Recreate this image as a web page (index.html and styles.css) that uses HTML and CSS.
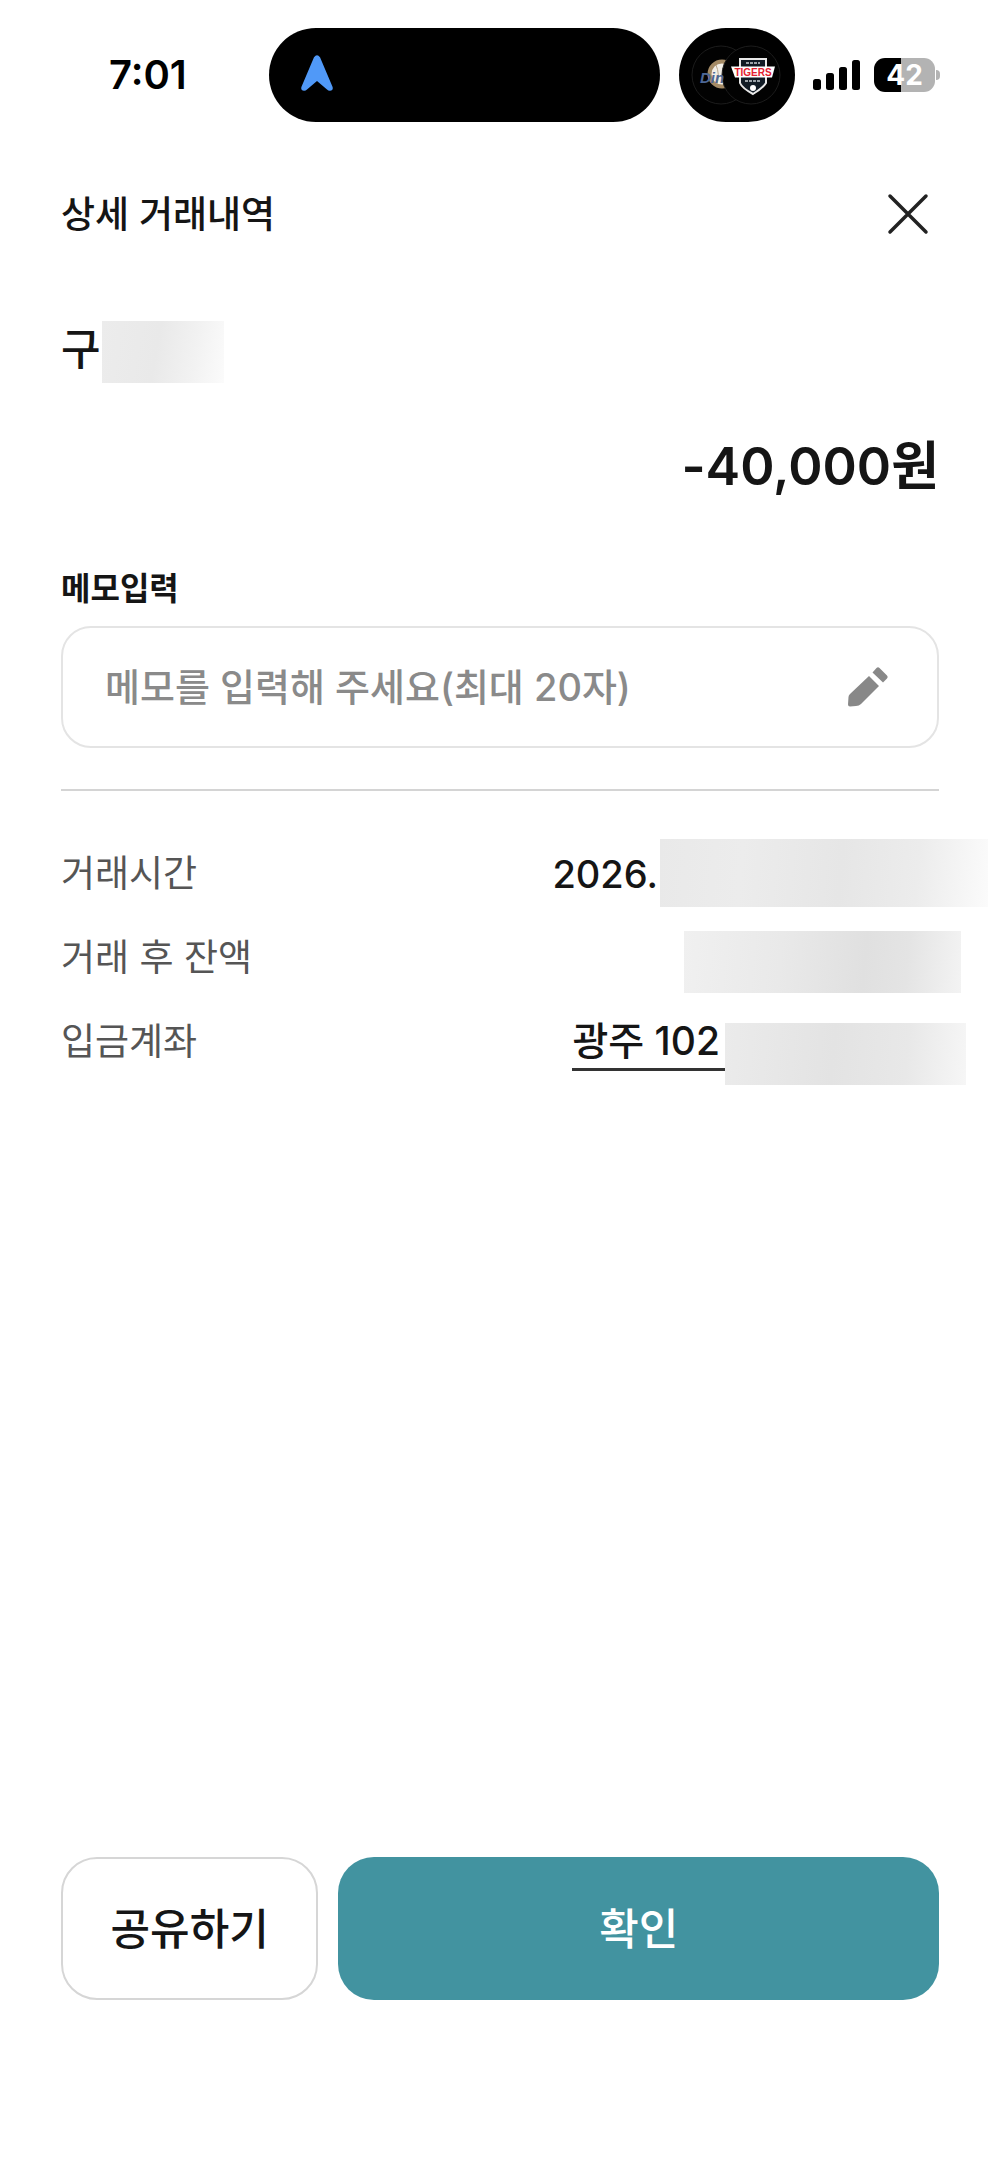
FILE: index.html
```html
<!DOCTYPE html>
<html lang="ko">
<head>
<meta charset="utf-8">
<meta name="viewport" content="width=device-width, initial-scale=1">
<title>상세 거래내역</title>
<link rel="stylesheet" href="styles.css">
</head>
<body>
<div class="screen">
  <div class="status-bar">
    <span class="clock">7:01</span>
    <div class="island">
      <svg width="34" height="37" viewBox="0 0 34 37" aria-hidden="true"><path d="M14 2.200Q17-1.500 20 2.200L32.600 32Q33.500 35.500 30 35.800Q28.500 36 27 34.500L17 26L7 34.500Q5.500 36 4 35.800Q.5 35.500 1.400 32Z" fill="#5099f8"/></svg>
    </div>
    <div class="activity">
      <svg width="116" height="94" viewBox="0 0 116 94" role="img" aria-label="Dinos, Tigers">
        <circle cx="42" cy="47" r="29" fill="#020202" stroke="#1c1c1c"/>
        <circle cx="43" cy="46" r="12.500" fill="#f2eee7" stroke="#a58b66" stroke-width="4"/>
        <path d="M37 37Q41 46 38 56" fill="none" stroke="#b9a58a"/>
        <circle cx="72" cy="47" r="29" fill="#020202" stroke="#1c1c1c"/>
        <text x="21" y="55" class="dinos">Din</text>
        <path d="M61 31H87V55Q84 60 74 66Q63 60 61 55Z" fill="#111b25" stroke="#e8e8e8" stroke-width="2"/>
        <path d="M67 35H81" stroke="#9aa2a8" stroke-width="2" stroke-dasharray="3 1"/>
        <path d="M66 53H82" stroke="#9aa2a8" stroke-width="2" stroke-dasharray="3 1"/>
        <circle cx="74" cy="60" r="3" fill="#fff"/>
        <path d="M52 38.500H96L93 49.500H56Z" fill="#fff"/>
        <text x="74" y="48" text-anchor="middle" class="tigers">TIGERS</text>
      </svg>
    </div>
    <div class="indicators">
      <svg width="48" height="32" viewBox="0 0 48 32" aria-hidden="true"><rect x="0" y="20" width="8" height="11" rx="2.500"/><rect x="13" y="14" width="8" height="17" rx="2.500"/><rect x="26" y="8" width="8" height="23" rx="2.500"/><rect x="39" y="1" width="8" height="30" rx="2.500"/></svg>
      <div class="battery"><span class="battery-level">42</span><span class="battery-tip"></span></div>
    </div>
  </div>

  <header class="header">
    <h1 class="title">상세 거래내역</h1>
    <button class="close" type="button" aria-label="닫기">
      <svg width="42" height="42" viewBox="0 0 42 42" aria-hidden="true"><path d="M3 3L39 39M39 3L3 39" stroke="#222" stroke-width="3.500" stroke-linecap="round"/></svg>
    </button>
  </header>

  <main class="content">
    <div class="payee">구<span class="mask mask-name"></span></div>
    <p class="amount">-40,000원</p>

    <label class="memo-label" for="memo">메모입력</label>
    <div class="memo-box">
      <input class="memo-input" id="memo" type="text" maxlength="20" placeholder="메모를 입력해 주세요(최대 20자)">
      <button class="edit" type="button" aria-label="메모 편집">
        <svg width="42" height="42" viewBox="0 0 42 42" aria-hidden="true"><path d="M22 10L32 20L14 38Q12 40 9 40L3 40.500Q1 40.500 1 38.500L1.500 31Q1.500 29.500 3 28ZM25.500 6.500L29.500 2Q31 .5 32.500 2L40 9.500Q41.500 11 40 12.500L36 16.500Z" fill="#888"/></svg>
      </button>
    </div>

    <dl class="details">
      <div class="row">
        <dt>거래시간</dt>
        <dd>2026.<span class="mask mask-time"></span></dd>
      </div>
      <div class="row">
        <dt>거래 후 잔액</dt>
        <dd><span class="mask mask-balance"></span></dd>
      </div>
      <div class="row">
        <dt>입금계좌</dt>
        <dd><a class="account" href="#account">광주 102</a><span class="mask mask-account"></span></dd>
      </div>
    </dl>
  </main>

  <footer class="actions">
    <button class="button share" type="button">공유하기</button>
    <button class="button confirm" type="button">확인</button>
  </footer>
</div>
</body>
</html>
```
FILE: styles.css
```css
* {
  box-sizing: border-box;
}

body {
  margin: 0;
  background: #fff;
  color: #151515;
  font-family: Inter, "Noto Sans CJK KR", sans-serif;
  font-weight: 500;
}

button,
input {
  font: inherit;
  color: inherit;
}

button {
  padding: 0;
  border: 0;
  background: none;
  cursor: pointer;
}

svg {
  display: block;
}

.screen {
  display: flex;
  flex-direction: column;
  min-height: 100vh;
  padding: 28px 61px 168px;
  overflow-x: hidden;
}

.status-bar {
  display: flex;
  align-items: center;
  height: 94px;
}

.clock {
  flex: 1;
  padding-left: 48px;
  color: #000;
  font-size: 40px;
  font-weight: 600;
  line-height: 48px;
}

.island {
  display: flex;
  align-items: center;
  width: 391px;
  height: 94px;
  padding: 0 31px 4px;
  border-radius: 47px;
  background: #000;
}

.activity {
  width: 116px;
  height: 94px;
  margin: 0 18px 0 19px;
  border-radius: 47px;
  background: #000;
}

.dinos {
  fill: #4c6796;
  font: italic 700 15px "Liberation Sans", sans-serif;
}

.tigers {
  fill: #e3202f;
  font: 700 10px "Liberation Sans", sans-serif;
}

.indicators {
  display: flex;
  align-items: center;
  gap: 13px;
}

.battery {
  position: relative;
  width: 61px;
  height: 34px;
  margin-right: 4px;
}

.battery-level {
  display: block;
  border-radius: 11px;
  background: linear-gradient(90deg, #000 44%, #b3b3b3 44%);
  color: #fff;
  font-size: 28px;
  font-weight: 700;
  line-height: 34px;
  text-align: center;
}

.battery-tip {
  position: absolute;
  top: 12px;
  right: -5px;
  width: 4px;
  height: 10px;
  border-radius: 0 5px 5px 0;
  background: #b3b3b3;
}

.header {
  display: flex;
  align-items: center;
  justify-content: space-between;
  margin-top: 64px;
  padding-right: 10px;
}

.title {
  margin: 0;
  padding-top: 2px;
  font-size: 37px;
  font-weight: 500;
  line-height: 54px;
}

.payee {
  display: flex;
  height: 62px;
  margin-top: 79px;
  font-size: 43px;
  line-height: 56px;
}

.mask {
  flex: none;
  height: 62px;
}

.mask-name {
  width: 122px;
  margin-left: 1px;
  background: linear-gradient(100deg, #ececec, #e9e9e9 45%, #f2f2f2 75%, #fbfbfb);
}

.amount {
  margin: 44px 0 0;
  font-size: 52px;
  font-weight: 600;
  line-height: 80px;
  text-align: right;
}

.memo-label {
  display: block;
  margin-top: 58px;
  font-size: 32px;
  font-weight: 700;
  line-height: 48px;
}

.memo-box {
  display: flex;
  align-items: center;
  height: 122px;
  margin-top: 13px;
  padding: 0 48px 0 42px;
  border: 2px solid #e4e4e4;
  border-radius: 30px;
}

.memo-input {
  flex: 1;
  min-width: 0;
  padding: 0;
  border: 0;
  outline: 0;
  background: none;
  font-size: 38px;
  line-height: 56px;
}

.memo-input::placeholder {
  color: #8a8a8a;
  opacity: 1;
}

.details {
  margin: 41px 0 0;
  padding-top: 40px;
  border-top: 2px solid #d4d4d4;
}

.row {
  display: flex;
  justify-content: space-between;
  height: 84px;
  font-size: 37px;
  line-height: 86px;
}

.row dt {
  color: #555;
  font-weight: 400;
}

.row dd {
  display: flex;
  align-items: flex-start;
  margin: 0;
  font-size: 38px;
}

.mask-time {
  width: 328px;
  height: 68px;
  margin: 8px -49px 0 2px;
  background: linear-gradient(95deg, #e9e9e9, #ececec 25%, #e6e6e6 55%, #ececec 78%, #fbfbfb);
}

.mask-balance {
  width: 277px;
  margin: 16px -22px 0 0;
  background: linear-gradient(95deg, #f0f0f0, #e9e9e9 35%, #e0e0e0 65%, #e4e4e4 80%, #f3f3f3);
}

.account {
  margin-top: 15px;
  padding-right: 5px;
  border-bottom: 3px solid #333;
  color: inherit;
  font-size: 39px;
  line-height: 54px;
  text-decoration: none;
}

.mask-account {
  width: 241px;
  margin: 24px -27px 0 0;
  background: linear-gradient(95deg, #ebebeb, #e3e3e3 45%, #e8e8e8 75%, #f6f6f6);
}

.actions {
  display: grid;
  grid-template-columns: 3fr 7fr;
  gap: 20px;
  margin-top: auto;
}

.button {
  height: 143px;
  padding-bottom: 6px;
  border-radius: 36px;
  font-size: 43px;
}

.share {
  border: 2px solid #d6d6d6;
}

.confirm {
  background: #4293a0;
  color: #fff;
}
```
